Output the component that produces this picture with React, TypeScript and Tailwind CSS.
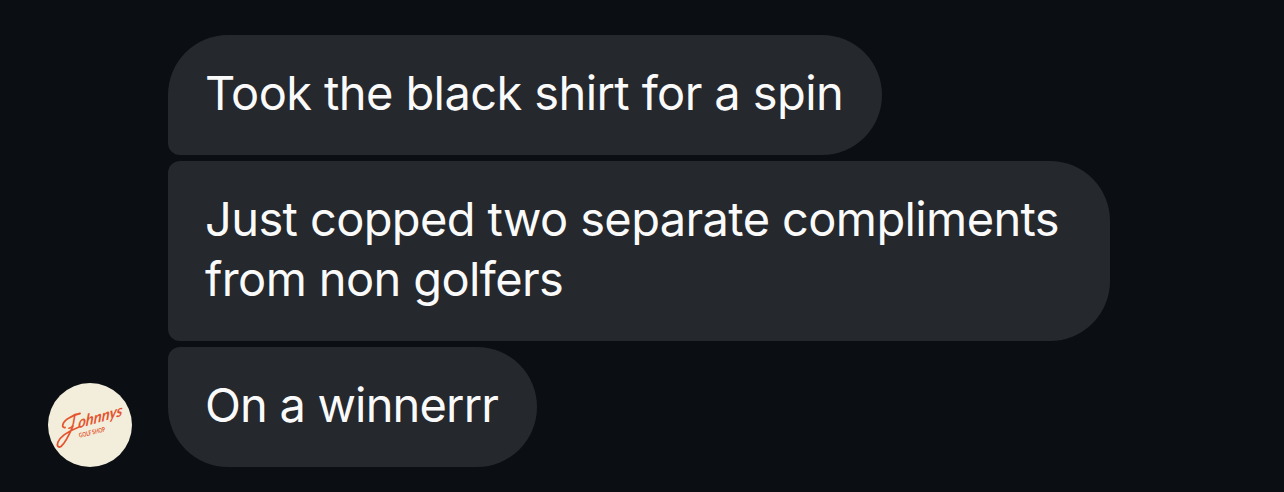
import React from "react";

// Message interface
interface Message {
  id: number;
  text: string;
  className: string;
}

// Corners on the sender's side tighten where bubbles meet
const messages: Message[] = [
  {
    id: 1,
    text: "Took the black shirt for a spin",
    className: "w-[714px] rounded-bl-[12px] tracking-[-0.6px]",
  },
  {
    id: 2,
    text: "Just copped two separate compliments from non golfers",
    className: "w-[942px] rounded-l-[12px] tracking-[-0.62px]",
  },
  {
    id: 3,
    text: "On a winnerrr",
    className: "w-[369px] rounded-tl-[12px] tracking-[-0.82px]",
  },
];

const Avatar: React.FC = () => (
  <svg
    className="size-[84px] shrink-0 rounded-full bg-[#f2eedb]"
    viewBox="0 0 84 84"
    role="img"
    aria-label="Johnnys Golf Shop"
  >
    <g fill="#e5542f" fontFamily="Lato, sans-serif" fontWeight="700">
      {/* Swash that trails from the capital */}
      <path
        d="M17 44.5C13 45 14 39 21 35C25 32.5 29 31 32 30.5M25 43C22 50 17 60 13 63.5C10 65 8.5 63 10 59C13 52 21 48 31 44"
        fill="none"
        stroke="#e5542f"
        strokeWidth="1.8"
        strokeLinecap="round"
      />
      <g transform="translate(20.5 46) rotate(-16) skewX(-20)">
        <text fontSize="18" fontStyle="italic" fontWeight="400">
          J
        </text>
        <text
          x="10"
          y="2"
          fontSize="15.5"
          fontStyle="italic"
          textLength="46"
          lengthAdjust="spacingAndGlyphs"
        >
          ohnnys
        </text>
      </g>
      <text
        transform="translate(31.5 54.8) rotate(-14)"
        fontSize="6.5"
        textLength="27"
        lengthAdjust="spacingAndGlyphs"
      >
        GOLF SHOP
      </text>
    </g>
  </svg>
);

const MessageBubble: React.FC<{ message: Message }> = ({ message }) => (
  <div className={`rounded-[60px] bg-[#25282d] pt-[28px] pr-[30px] pb-[32px] pl-[37px] ${message.className}`}>
    <p className="text-[47px] leading-[60px] text-[#fafafa]">{message.text}</p>
  </div>
);

const App: React.FC = () => {
  return (
    <main className="flex h-[492px] w-full items-end gap-9 overflow-hidden bg-[#0b0e13] pb-[25px] pl-12 font-['Inter',sans-serif]">
      <Avatar />
      <div className="flex flex-col items-start gap-1.5">
        {messages.map((message) => (
          <MessageBubble key={message.id} message={message} />
        ))}
      </div>
    </main>
  );
};

export default App;
